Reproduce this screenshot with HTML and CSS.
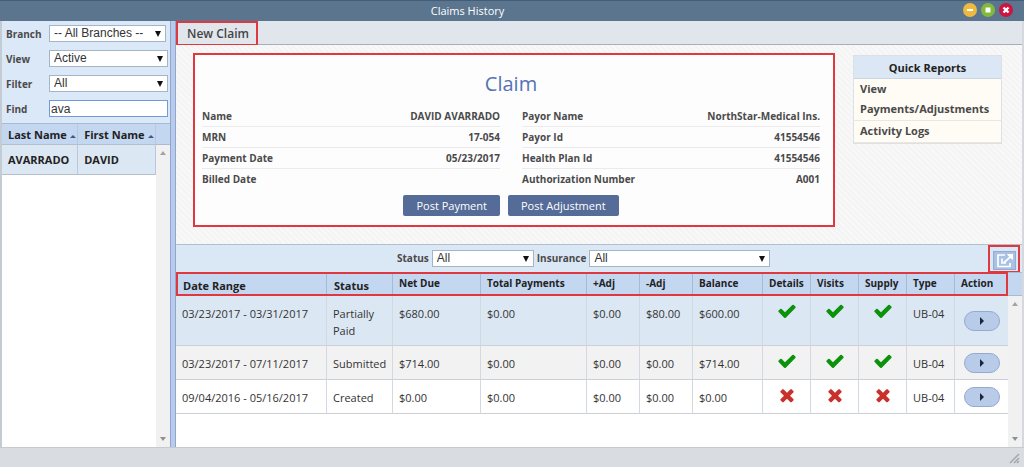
FILE: index.html
```html
<!DOCTYPE html>
<html lang="en">
<head>
<meta charset="utf-8">
<title>Claims History</title>
<link rel="stylesheet" href="styles.css">
</head>
<body>
<svg class="sprite" aria-hidden="true">
  <symbol id="check" viewBox="0 0 1792 1792"><path d="M1671 566q0 40-28 68l-724 724-136 136q-28 28-68 28t-68-28l-136-136-362-362q-28-28-28-68t28-68l136-136q28-28 68-28t68 28l294 295 656-657q28-28 68-28t68 28l136 136q28 28 28 68z"/></symbol>
  <symbol id="cross" viewBox="0 0 1792 1792"><path d="M1490 1322q0 40-28 68l-136 136q-28 28-68 28t-68-28l-294-294-294 294q-28 28-68 28t-68-28l-136-136q-28-28-28-68t28-68l294-294-294-294q-28-28-28-68t28-68l136-136q28-28 68-28t68 28l294 294 294-294q28-28 68-28t68 28l136 136q28 28 28 68t-28 68l-294 294 294 294q28 28 28 68z"/></symbol>
</svg>
<div class="window">
  <header class="titlebar">
    <h1 class="title">Claims History</h1>
    <div class="controls">
      <button class="ctl ctl-min" aria-label="Minimize"><svg viewBox="0 0 14 14"><path d="M4 6h6v2H4z"/></svg></button>
      <button class="ctl ctl-max" aria-label="Maximize"><svg viewBox="0 0 14 14"><path d="M4.500 4.500h5v5h-5z"/></svg></button>
      <button class="ctl ctl-close" aria-label="Close"><svg viewBox="0 0 14 14"><path d="M4.500 4.500l5 5M9.500 4.500l-5 5" stroke="#fff" stroke-width="2.400"/></svg></button>
    </div>
  </header>
  <div class="content">
    <aside class="sidebar">
      <form class="filters">
        <label for="branch">Branch</label>
        <span class="pick pick-branch"><select id="branch"><option>-- All Branches --</option></select></span>
        <label for="view">View</label>
        <span class="pick"><select id="view"><option>Active</option></select></span>
        <label for="filter">Filter</label>
        <span class="pick"><select id="filter"><option>All</option></select></span>
        <label for="find">Find</label>
        <input class="find" id="find" type="text" value="ava">
      </form>
      <div class="list">
        <table class="patients">
          <thead><tr><th class="sorted">Last Name</th><th class="sorted">First Name</th></tr></thead>
          <tbody><tr><td>AVARRADO</td><td>DAVID</td></tr></tbody>
        </table>
        <div class="gutter"><div class="track"></div></div>
      </div>
    </aside>
    <div class="splitter"></div>
    <main class="main">
      <div class="toolbar"><button class="new-claim marked">New Claim</button></div>
      <section class="overview">
        <div class="claim marked">
          <h2 class="claim-title">Claim</h2>
          <div class="facts">
            <dl class="fact-list">
              <div class="fact"><dt>Name</dt><dd>DAVID AVARRADO</dd></div>
              <div class="fact"><dt>MRN</dt><dd>17-054</dd></div>
              <div class="fact"><dt>Payment Date</dt><dd>05/23/2017</dd></div>
              <div class="fact"><dt>Billed Date</dt><dd></dd></div>
            </dl>
            <dl class="fact-list">
              <div class="fact"><dt>Payor Name</dt><dd>NorthStar-Medical Ins.</dd></div>
              <div class="fact"><dt>Payor Id</dt><dd>41554546</dd></div>
              <div class="fact"><dt>Health Plan Id</dt><dd>41554546</dd></div>
              <div class="fact"><dt>Authorization Number</dt><dd>A001</dd></div>
            </dl>
          </div>
          <div class="actions">
            <button class="post">Post Payment</button>
            <button class="post">Post Adjustment</button>
          </div>
        </div>
        <nav class="reports">
          <h3 class="reports-title">Quick Reports</h3>
          <a class="report" href="#">View Payments/Adjustments</a>
          <a class="report" href="#">Activity Logs</a>
        </nav>
      </section>
      <div class="claim-filter">
        <label for="status">Status</label>
        <span class="pick pick-status"><select id="status"><option>All</option></select></span>
        <label for="insurance">Insurance</label>
        <span class="pick pick-insurance"><select id="insurance"><option>All</option></select></span>
        <div class="export-box marked">
          <button class="export" aria-label="Export"><svg viewBox="0 0 21 17"><path d="M11 3H4v11.500h12V11M8 6.500V11h4M10 10.500l8-7" fill="none" stroke="#fff" stroke-width="1.700"/><path d="M13 2h6v6l-2-1.500-3-3z" fill="#fff"/></svg></button>
        </div>
      </div>
      <div class="grid">
        <table class="claims">
          <colgroup>
            <col class="c-date"><col class="c-status"><col class="c-due"><col><col class="c-adj"><col class="c-adj"><col class="c-bal"><col class="c-flag"><col class="c-flag"><col class="c-flag"><col class="c-flag"><col class="c-adj">
          </colgroup>
          <thead class="marked">
            <tr><th class="major">Date Range</th><th class="major">Status</th><th>Net Due</th><th>Total Payments</th><th>+Adj</th><th>-Adj</th><th>Balance</th><th>Details</th><th>Visits</th><th>Supply</th><th>Type</th><th>Action</th></tr>
          </thead>
          <tbody>
            <tr class="selected"><td>03/23/2017 - 03/31/2017</td><td>Partially Paid</td><td>$680.00</td><td>$0.00</td><td>$0.00</td><td>$80.00</td><td>$600.00</td><td class="flag"><svg class="yes"><use href="#check"/></svg></td><td class="flag"><svg class="yes"><use href="#check"/></svg></td><td class="flag"><svg class="yes"><use href="#check"/></svg></td><td>UB-04</td><td class="act"><button class="go" aria-label="Actions"></button></td></tr>
            <tr class="alt"><td>03/23/2017 - 07/11/2017</td><td>Submitted</td><td>$714.00</td><td>$0.00</td><td>$0.00</td><td>$0.00</td><td>$714.00</td><td class="flag"><svg class="yes"><use href="#check"/></svg></td><td class="flag"><svg class="yes"><use href="#check"/></svg></td><td class="flag"><svg class="yes"><use href="#check"/></svg></td><td>UB-04</td><td class="act"><button class="go" aria-label="Actions"></button></td></tr>
            <tr><td>09/04/2016 - 05/16/2017</td><td>Created</td><td>$0.00</td><td>$0.00</td><td>$0.00</td><td>$0.00</td><td>$0.00</td><td class="flag"><svg class="no"><use href="#cross"/></svg></td><td class="flag"><svg class="no"><use href="#cross"/></svg></td><td class="flag"><svg class="no"><use href="#cross"/></svg></td><td>UB-04</td><td class="act"><button class="go" aria-label="Actions"></button></td></tr>
          </tbody>
        </table>
        <div class="gutter"><div class="track"></div></div>
      </div>
    </main>
  </div>
  <footer class="statusbar"><svg class="grip" viewBox="0 0 12 12"><path d="M1 11L10 2M5 11l5-5M8 11l2-2" fill="none" stroke="#a3a7ab" stroke-width="1.500"/></svg></footer>
</div>
</body>
</html>
```
FILE: styles.css
```css
*, *::before { box-sizing: border-box; }
body { margin: 0; font: 11px/17px "Open Sans", sans-serif; color: #333; }
button, select, input { font: inherit; color: inherit; margin: 0; }
button { padding: 0; border: 0; background: none; }
h1, h2, h3, dl, dd { margin: 0; }
.sprite { position: absolute; width: 0; height: 0; }
.marked { outline: 2px solid #e0383f; outline-offset: -2px; }

.window { display: flex; flex-direction: column; min-height: 100vh; background: #d9dde1; }
.titlebar { display: grid; grid-template-columns: 1fr auto 1fr; align-items: center; height: 21px; padding: 0 11px 0 0; background: #5b758e; border-top: 1px solid #425d78; }
.title { grid-column: 2; padding-right: 78px; font-size: 11px; line-height: 17px; padding-bottom: 2px; font-weight: 400; color: #fff; }
.controls { display: flex; justify-content: flex-end; gap: 4px; padding-bottom: 2px; }
.ctl { width: 14px; height: 14px; border-radius: 50%; }
.ctl svg { display: block; fill: #fff; }
.ctl-min { background: #eeb93f; }
.ctl-max { background: #82b93c; }
.ctl-close { background: #cc1543; }

.content { flex: 1; display: grid; grid-template-columns: 170px 6px 1fr; }
.sidebar { display: flex; flex-direction: column; border-left: 2px solid #c3cbd3; background: #dbe8f7; }
.splitter { background: #b8cbea; border: solid #8ea6d0; border-width: 0 1px; }
.filters { display: grid; grid-template-columns: 43px 1fr; grid-auto-rows: 17px; row-gap: 8px; align-items: center; padding: 4px 2px 6px 4px; font-size: 10px; font-weight: 700; color: #4a4a4a; }
.filters label { padding-top: 2px; }

.pick { position: relative; display: block; height: 17px; }
.pick::after { content: ""; position: absolute; right: 5px; top: 6px; border: solid transparent; border-width: 6px 3px 0; border-top-color: #111; pointer-events: none; }
.pick select { display: block; width: 100%; height: 17px; padding: 0 4px; appearance: none; border: 1px solid #a5b4c6; border-radius: 0; background: #fff; font: 12px/15px "Liberation Sans", sans-serif; color: #333; }
.pick-branch { margin-right: 2px; }
.find { width: 100%; height: 17px; padding: 0 1px; border: 1px solid #6f9bdc; font: 12px/15px "Liberation Sans", sans-serif; color: #333; }

.list, .grid { flex: 1; display: flex; align-items: stretch; background: #fff; }
.patients, .claims { flex: 1; align-self: flex-start; border-collapse: separate; border-spacing: 0; table-layout: fixed; }
.patients { color: #222; font-weight: 700; border-top: 1px solid #a9bbd3; }
.patients th, .patients td { padding: 0 0 0 6px; text-align: left; white-space: nowrap; border-right: 1px solid #b9c8dc; border-bottom: 1px solid #b5bfcc; }
.patients th { height: 21px; background: #c4d7f0; }
.patients td { height: 30px; background: #dce7f4; }
.sorted::after { content: ""; display: inline-block; margin-left: 3px; vertical-align: 1px; border: solid transparent; border-width: 0 3px 3px; border-bottom-color: #41597e; }
.gutter { width: 14px; display: flex; flex-direction: column; background: #f1f1f1; }
.gutter::before { content: ""; height: 24px; background: #c4d7f0; border: solid #a9bbd3; border-width: 1px 0; }
.list .gutter::before { height: 22px; }
.track { flex: 1; display: flex; flex-direction: column; justify-content: space-between; align-items: center; padding: 6px 0; }
.track::before, .track::after { content: ""; border: solid transparent; }
.track::before { border-width: 0 3px 4px; border-bottom-color: #a3a3a3; }
.track::after { border-width: 4px 3px 0; border-top-color: #8f8f8f; }

.main { display: flex; flex-direction: column; min-width: 0; border-right: 2px solid #d5d9dd; }
.toolbar { display: flex; height: 24px; background: #e1e5ec; border-bottom: 1px solid #a9afb7; }
.new-claim { width: 82px; height: 25px; padding-left: 2px; font-size: 12px; font-weight: 600; color: #444; }
.overview { display: grid; grid-template-columns: 1fr 149px; column-gap: 18px; align-items: start; padding: 8px 20px 17px 17px; background: repeating-linear-gradient(45deg, #f8f8f8 0 2px, #f4f4f5 2px 4px); }
.claim { display: flex; flex-direction: column; padding: 16px 15px 11px 9px; background: #fdfdfe; }
.claim-title { font-size: 20px; line-height: 30px; font-weight: 400; text-align: center; color: #5472b4; }
.facts { display: grid; grid-template-columns: 1fr 1fr; column-gap: 22px; padding-top: 7px; }
.fact { display: flex; justify-content: space-between; height: 21px; padding-top: 2px; font-size: 10px; font-weight: 700; color: #4a4a4a; border-bottom: 1px solid #ebebed; }
.fact:last-child { border-bottom: 0; }
.actions { display: flex; justify-content: center; gap: 8px; padding-top: 5px; }
.post { height: 21px; padding: 0 13px; border-radius: 2px; background: #556b98; color: #fff; }
.reports { margin-top: 2px; border: 1px solid #dde1e6; background: #fffcf5; font-weight: 700; }
.reports-title { height: 23px; font-size: 11px; line-height: 23px; text-align: center; color: #222; background: #dbe7f4; border-bottom: 1px solid #ccd5df; }
.report { display: block; padding: 0 6px 1px; line-height: 20px; color: #4a4a4a; text-decoration: none; border-bottom: 1px solid #ece8e0; }

.claim-filter { display: flex; align-items: center; gap: 3px; height: 28px; padding-left: 221px; background: #dae7f5; border-top: 1px solid #b3bfcc; font-size: 10px; font-weight: 700; color: #4a4a4a; }
.pick-status { width: 102px; }
.pick-insurance { width: 181px; }
.export-box { margin-left: auto; margin-right: 2px; width: 32px; height: 28px; padding: 6px 4px 3px 5px; }
.export { display: block; width: 23px; height: 19px; background: #a9c1e4; border: 1px solid #91abd3; }
.export svg { display: block; }

.claims { width: 100%; color: #333; }
.claims th, .claims td { text-align: left; padding: 0 0 0 6px; border-right: 1px solid #d3d9e0; }
.claims th { height: 24px; padding-bottom: 2px; font-size: 10px; font-weight: 700; color: #222; background: #c4d7f0; border-right-color: #a9b9cf; white-space: nowrap; }
.claims .major { padding: 3px 0 0 7px; font-size: 11px; }
.claims td { padding: 9px 0 6px 6px; height: 34px; vertical-align: top; border-bottom: 1px solid #ccd0d5; background: #fff; }
.claims .selected td { background: #dce7f4; }
.claims .alt td { background: #f2f2f2; }
.claims tr > :last-child { border-right: 0; }
.claims .flag { padding: 5px 0 0; text-align: center; }
.claims .act { padding: 0; vertical-align: middle; text-align: center; }
.flag svg { width: 20px; height: 20px; }
.yes { fill: #0c930c; }
.no { fill: #c9302c; }
.go { display: inline-flex; align-items: center; justify-content: center; width: 36px; height: 20px; vertical-align: middle; border: 1px solid #93aad2; border-radius: 10px; background: #b8cbe9; }
.go::after { content: ""; border: solid transparent; border-width: 4px 0 4px 4px; border-left-color: #1c2638; }
.c-date { width: 151px; }
.c-status { width: 66px; }
.c-due { width: 88px; }
.c-adj { width: 53px; }
.c-bal { width: 70px; }
.c-flag { width: 48px; }
.statusbar { display: flex; justify-content: flex-end; align-items: flex-end; height: 20px; padding: 3px; border-top: 1px solid #c6cace; }
.grip { width: 12px; height: 12px; }
```
